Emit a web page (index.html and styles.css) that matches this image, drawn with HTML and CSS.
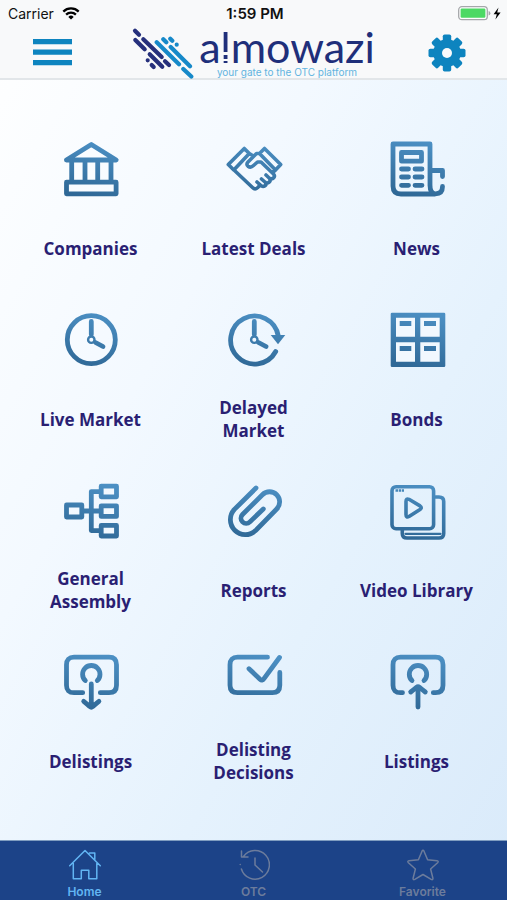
FILE: index.html
```html
<!DOCTYPE html>
<html lang="en">
<head>
<meta charset="utf-8">
<meta name="viewport" content="width=device-width, initial-scale=1">
<title>almowazi</title>
<link rel="stylesheet" href="styles.css">
</head>
<body>
<svg class="defs" width="0" height="0" aria-hidden="true">
  <defs>
    <linearGradient id="steel" gradientUnits="userSpaceOnUse" x1="36" y1="0" x2="24" y2="56">
      <stop offset="0" stop-color="#4c90c4"/>
      <stop offset="1" stop-color="#2f6896"/>
    </linearGradient>
  </defs>
</svg>
<header class="top">
  <div class="status">
    <div class="status-left">
      <span>Carrier</span>
      <svg width="18" height="13" viewBox="0 0 18 13" fill="none" stroke="#000" stroke-width="2.3">
        <path d="M1.3 4.6a11 11 0 0 1 15.4 0M4.1 7.6a7 7 0 0 1 9.8 0"/>
        <path d="M9 12.6L6.3 9.9a3.9 3.9 0 0 1 5.4 0z" fill="#000" stroke="none"/>
      </svg>
    </div>
    <span class="time">1:59 PM</span>
    <div class="status-right">
      <svg width="44" height="15" viewBox="0 0 44 15">
        <rect x="0.7" y="0.7" width="28.6" height="13" rx="3.2" fill="#fff" stroke="#a5a7aa" stroke-width="1.3"/>
        <rect x="2.6" y="2.6" width="24.8" height="9.2" rx="1.2" fill="#4cd964"/>
        <path d="M30.6 5v4.5q1.8-.6 1.8-2.3t-1.8-2.2z" fill="#a5a7aa"/>
        <path d="M40.5 1.5L35.6 8.2h3.2l-1.4 5.2 5.2-6.8h-3.4z" fill="#000"/>
      </svg>
    </div>
  </div>
  <div class="nav">
    <button class="icon-button" type="button" aria-label="Menu">
      <svg width="39" height="38" viewBox="0 0 39 38" fill="#0d84bf"><path d="M0 5h39v5.300H0zM0 15.500h39v5.300H0zM0 26h39v5.300H0z"/></svg>
    </button>
    <div class="logo">
      <svg width="62" height="52" viewBox="0 0 62 52" fill="none" stroke-width="4.2" stroke-linecap="round">
        <path stroke="#26307c" d="M3 3.700l4 4M11.300 12.300l18.400 17.700M33 34.300l4 3.700M3.300 13l9.400 9.300M17.700 27.300l12.600 12.400M15.700 33.300h.01M19.700 38l2 2"/>
        <path stroke="#1689c9" d="M24.700 15.300l22.300 22M51.300 42l8 7.600M31.300 12.300l3 3M38.700 20l19.300 19.300M38.300 11.700l2 2M44.700 17.700h.01"/>
      </svg>
      <div class="wordmark">
        <span class="name">a<span class="cut">l</span>mowazi</span>
        <span class="tagline">your gate to the OTC platform</span>
      </div>
    </div>
    <button class="icon-button" type="button" aria-label="Settings">
      <svg width="38" height="38" viewBox="-19 -19 38 38">
        <g fill="#0d84bf">
          <rect x="-4.200" y="-18.500" width="8.400" height="37" rx="1.800"/>
          <rect x="-18.500" y="-4.200" width="37" height="8.400" rx="1.800"/>
          <rect x="-4.200" y="-18.500" width="8.400" height="37" rx="1.800" transform="rotate(45)"/>
          <rect x="-4.200" y="-18.500" width="8.400" height="37" rx="1.800" transform="rotate(-45)"/>
          <circle r="13.800"/>
        </g>
        <circle r="5" fill="#f8fafb"/>
      </svg>
    </button>
  </div>
</header>

<main class="menu">
  <a class="tile" href="#companies">
    <svg class="icon" viewBox="0 0 56 56"><path d="M28.300 3.500L53.200 19H3.400zM8.700 20v20M22 20v20M34.700 20v20M48 20v20M3.500 41.200h49.600v11.600H3.500z"/></svg>
    <span class="label">Companies</span>
  </a>
  <a class="tile" href="#deals">
    <svg class="icon thin" viewBox="0 0 56 56"><path d="M2.300 23.500L18.300 7.500l5 5L7.800 29zM54.700 23.500L38.500 7.500l-5 5L49.500 29zM23.300 12.500l4 2.500M8 29l18.500 17.500q2.500 2.500 5 .2l2-2M33.500 12.500h-3L22 21q-2.200 2.400 0 4.200 2.700 2 5.500-.7l4-3.500h3.500L47.500 33q1.800 2 .2 3.800t-4 .7L40 34M43.500 37.500q1.500 2-.3 3.600t-3.700.4L35.500 38M39.500 41.500q1.200 2-.5 3.200t-3.500.3L31 41M49.500 29l-3 2.500"/></svg>
    <span class="label">Latest Deals</span>
  </a>
  <a class="tile" href="#news">
    <svg class="icon" viewBox="0 0 56 56"><path d="M41 45V3H4v42q0 8 8 8h34M41 29.500h12.500v6M41 44q0 8.800 5.500 8.800 7 0 7-7.300M12.500 11.500h20v8.700h-20zM12.500 28h7M26 28h7M12.500 36h7M26 36h7M12.500 44.300h7M26 44.300h7"/></svg>
    <span class="label">News</span>
  </a>
  <a class="tile" href="#live">
    <svg class="icon" viewBox="0 0 56 56"><circle cx="28.300" cy="27.700" r="24"/><path d="M28.300 9.500v13M32.500 30.500l7.500 4"/><circle cx="28.300" cy="27.700" r="3.200" stroke-width="2.400"/></svg>
    <span class="label">Live Market</span>
  </a>
  <a class="tile" href="#delayed">
    <svg class="icon" viewBox="0 0 56 56"><path d="M49.700 39.500A24 24 0 1 1 52.300 24M28.300 9.500v13M32.500 30.500l7.500 4"/><circle cx="28.300" cy="27.700" r="3.200" stroke-width="2.400"/><path class="solid" d="M44.700 23h14.600L52 32.200z"/></svg>
    <span class="label">Delayed Market</span>
  </a>
  <a class="tile" href="#bonds">
    <svg class="icon" viewBox="0 0 56 56"><path class="pane" d="M6 5h46v46H6z"/><path class="solid" fill-rule="evenodd" d="M3 .7h52q1.300 0 1.300 1.300v51.700q0 1.300-1.300 1.300H3q-1.300 0-1.300-1.300V2Q1.700.7 3 .7zM7 5.700v19h19v-19zM31.300 5.700v19h19.400v-19zM7 30.300v19.400h19V30.300zM31.300 30.300v19.400h19.400V30.300zM10.700 9h11.600v5H10.700zM35 9h12v5H35zM10.700 34h11.600v5H10.700zM35 34h12v5H35z"/></svg>
    <span class="label">Bonds</span>
  </a>
  <a class="tile" href="#assembly">
    <svg class="icon" viewBox="0 0 56 56"><path d="M3.500 22h15.300v12H3.500zM38.200 3.200h15.300v10.600H38.200zM38.200 22.800h15.300v10.600H38.200zM38.200 42.400h15.300V53H38.200zM19 28h19M38 8.600h-9.700v39H38"/></svg>
    <span class="label">General Assembly</span>
  </a>
  <a class="tile" href="#reports">
    <svg class="icon" viewBox="0 0 56 56"><path d="M30 5L8.400 26.400a15 15 0 0 0 21.200 21.200L50.700 26A10.100 10.100 0 0 0 36.400 11.700L16.500 31.500a5.200 5.200 0 0 0 7.400 7.400L37.300 26"/></svg>
    <span class="label">Reports</span>
  </a>
  <a class="tile" href="#video">
    <svg class="icon thin" viewBox="0 0 56 56"><rect x="3" y="3.700" width="41.600" height="42" rx="4"/><path d="M46.500 14H50q4.700 0 4.700 4.500v32q0 4.500-4.700 4.500H18q-4.700 0-4.700-4.500V47M17 18.500v13q0 3.500 3 2l11-7q2.500-1.800 0-3.600l-11-6.600q-3-1.300-3 2.200z"/><path d="M16.500 50.800h35" stroke-width="2.200"/><path d="M6.500 7.500H15" stroke-width="2.600" stroke-dasharray="2.500 .7" stroke-linecap="butt"/></svg>
    <span class="label">Video Library</span>
  </a>
  <a class="tile" href="#delistings">
    <svg class="icon" viewBox="0 0 56 56"><path d="M19.700 38.700H11q-7.500 0-7.500-7.500V10.700Q3.500 3.200 11 3.200h35q7.500 0 7.500 7.500v20.500q0 7.500-7.500 7.500h-8.700M22.300 26.500a8.700 8.700 0 1 1 12 0M28.300 30v23M20.700 47.300q4 3.200 6 5.200 1.600 1.300 3.200 0 2-2 6-5.200"/></svg>
    <span class="label">Delistings</span>
  </a>
  <a class="tile" href="#decisions">
    <svg class="icon" viewBox="0 0 56 56"><path d="M41.500 3.200H11.500q-7.500 0-7.500 7.500v20.500q0 7.500 7.500 7.500h34.800q7.500 0 7.500-7.500V18.500M23 14.700l11 10.500q2.200 2 4-.5L53.500 3.500"/></svg>
    <span class="label">Delisting Decisions</span>
  </a>
  <a class="tile" href="#listings">
    <svg class="icon" viewBox="0 0 56 56"><path d="M13.500 38.700H11.500q-7.500 0-7.500-7.500V10.700Q4 3.200 11.500 3.200h35q7.500 0 7.500 7.500v20.500q0 7.500-7.500 7.500h-2.200M23 26.500a8.700 8.700 0 1 1 12 0M29 33v20M21.700 38q3.500-2.700 5.800-4.700 1.500-1.300 3 0 2.300 2 5.800 4.700"/></svg>
    <span class="label">Listings</span>
  </a>
</main>

<nav class="tabs">
  <a class="tab active" href="#home" aria-current="page">
    <svg class="tab-icon" viewBox="0 0 32 32"><path d="M.7 16.700L16 1.500l15.300 15.200M4.300 14.500v15.200h8V21.300h7.500v8.400h8V14.500M20.500 4h5.300v6.500"/></svg>
    <span>Home</span>
  </a>
  <a class="tab" href="#otc">
    <svg class="tab-icon" viewBox="0 0 32 32"><path d="M5.500 7.500A14.300 14.300 0 1 1 3.400 20M2.200 15.500v.01M3.500 2v6H10M17 9v7l7.500 7"/></svg>
    <span>OTC</span>
  </a>
  <a class="tab" href="#favorite">
    <svg class="tab-icon" viewBox="0 0 32 32"><path d="M15 2.200q1-2 2 0l3.600 8.600 9.400.9q2 .4.600 2l-7 6.300 2.300 9.200q.2 2-1.700 1.200L16 25.500l-8.200 4.900q-1.900.8-1.700-1.200L8.400 20l-7-6.300q-1.400-1.600.6-2l9.400-.9z"/></svg>
    <span>Favorite</span>
  </a>
</nav>
</body>
</html>
```
FILE: styles.css
```css
* {
  box-sizing: border-box;
}

body {
  margin: 0;
  min-height: 100vh;
  display: flex;
  flex-direction: column;
  font-family: "Open Sans", "Noto Sans", sans-serif;
  background: linear-gradient(120deg, #ffffff 0%, #f3f9ff 35%, #e5f2fd 65%, #d9eafa 100%);
}

a {
  color: inherit;
  text-decoration: none;
}

svg {
  display: block;
}

.defs {
  position: absolute;
}

.top {
  background: #f8f9fa;
  border-bottom: 2px solid #e2e6e9;
}

.status {
  display: grid;
  grid-template-columns: 1fr auto 1fr;
  align-items: center;
  height: 27px;
  padding: 0 5px 0 8px;
  font-family: Inter, "Liberation Sans", sans-serif;
  font-size: 14px;
  color: #111;
}

.status-left {
  display: flex;
  align-items: center;
  gap: 8px;
}

.status-right {
  justify-self: end;
}

.time {
  font-size: 15px;
  font-weight: 600;
}

.nav {
  display: grid;
  grid-template-columns: auto 1fr auto;
  align-items: center;
  height: 51px;
  padding: 0 41px 0 33px;
}

.icon-button {
  padding: 0;
  border: 0;
  background: none;
  cursor: pointer;
}

.logo {
  display: flex;
  justify-content: center;
  align-items: flex-start;
  gap: 5px;
  height: 51px;
  padding-left: 7px;
}

.wordmark {
  display: flex;
  flex-direction: column;
  align-items: center;
}

.name {
  font-family: Lato, sans-serif;
  font-size: 43px;
  line-height: 40px;
  color: #1f2f7a;
}

.cut {
  color: transparent;
  background: linear-gradient(#1f2f7a 0 60%, transparent 60% 66%, #1f2f7a 66% 74%, transparent 74% 79%, #1f2f7a 79%);
  -webkit-background-clip: text;
  background-clip: text;
}

.tagline {
  font-family: Inter, sans-serif;
  font-size: 10px;
  line-height: 10px;
  color: #62b4e0;
}

.menu {
  flex: 1;
  display: grid;
  grid-template-columns: repeat(3, 1fr);
  align-content: start;
  row-gap: 41px;
  padding: 61px 9px 40px;
}

.tile {
  display: flex;
  flex-direction: column;
  align-items: center;
  gap: 28px;
}

.icon {
  width: 56px;
  height: 56px;
  overflow: visible;
  fill: none;
  stroke: url(#steel);
  stroke-width: 4.8;
  stroke-linecap: round;
  stroke-linejoin: round;
}

.icon.thin {
  stroke-width: 3.6;
}

.icon .solid {
  fill: url(#steel);
  stroke: none;
}

.icon .pane {
  fill: #f1f8fe;
  stroke: none;
}

.label {
  display: flex;
  align-items: center;
  min-height: 46px;
  max-width: 120px;
  font-size: 17px;
  font-weight: 700;
  line-height: 23px;
  text-align: center;
  color: #2a1f73;
}

.tabs {
  display: grid;
  grid-template-columns: repeat(3, 1fr);
  height: 60px;
  border-top: 1px solid #7f9dc0;
  background: #1c4388;
}

.tab {
  display: flex;
  flex-direction: column;
  align-items: center;
  padding-top: 8px;
  gap: 3px;
  font-family: Inter, "Liberation Sans", sans-serif;
  font-size: 12px;
  font-weight: 600;
  line-height: 16px;
  color: #6c7c9c;
}

.tab.active {
  color: #62b5f3;
}

.tab-icon {
  width: 32px;
  height: 32px;
  fill: none;
  stroke: currentColor;
  stroke-width: 1.5;
  stroke-linecap: round;
  stroke-linejoin: round;
}
```
